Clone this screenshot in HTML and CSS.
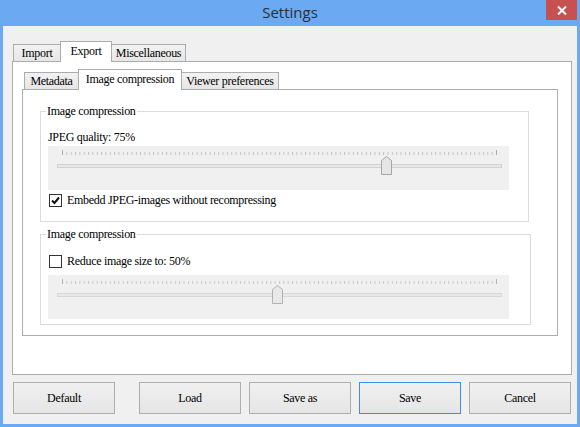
FILE: index.html
```html
<!DOCTYPE html>
<html>
<head>
<meta charset="utf-8">
<link rel="stylesheet" href="styles.css">
</head>
<body>
<div class="window">
  <div class="titlebar">
    <span></span>
    <span class="title">Settings</span>
    <span class="close">
      <svg width="10" height="9" viewBox="0 0 10 9"><path d="M1 0.5 L9 8.5 M9 0.5 L1 8.5" stroke="#fff" stroke-width="2"/></svg>
    </span>
  </div>
  <div class="client">
    <div class="tabs outer-tabs">
      <div class="tab t-import">Import</div>
      <div class="tab sel t-export">Export</div>
      <div class="tab t-misc">Miscellaneous</div>
    </div>
    <div class="panel outer-panel">
      <div class="tabs inner-tabs">
        <div class="tab t-meta">Metadata</div>
        <div class="tab sel t-imgc">Image compression</div>
        <div class="tab t-view">Viewer preferences</div>
      </div>
      <div class="panel inner-panel">
        <fieldset class="group g1">
          <legend>Image compression</legend>
          <div class="label">JPEG quality: 75%</div>
          <div class="slider">
            <svg width="461" height="44" viewBox="0 0 461 44">
              <defs>
                <pattern id="tk1" x="14" y="0" width="4.34" height="44" patternUnits="userSpaceOnUse">
                  <rect x="0" y="6" width="1" height="3" fill="#c2c2c2"/>
                </pattern>
              </defs>
              <rect x="14" y="0" width="435" height="44" fill="url(#tk1)"/>
              <rect x="14" y="4" width="1" height="5" fill="#ababab"/>
              <rect x="448" y="4" width="1" height="5" fill="#ababab"/>
              <rect x="9.5" y="18.5" width="444" height="3" fill="#e7e7e7" stroke="#d2d2d2"/>
              <path d="M333.5 14.5 L338.5 10.5 L343.5 14.5 L343.5 28.5 L333.5 28.5 Z" fill="#e6e6e6" stroke="#a6a6a6"/>
            </svg>
          </div>
          <label class="check">
            <span class="box">
              <svg width="11" height="11" viewBox="0 0 11 11"><path d="M2 5.5 L4.5 8 L9 2.5" fill="none" stroke="#111" stroke-width="2"/></svg>
            </span>
            <span>Embedd JPEG-images without recompressing</span>
          </label>
        </fieldset>
        <fieldset class="group g2">
          <legend>Image compression</legend>
          <label class="check">
            <span class="box"></span>
            <span>Reduce image size to: 50%</span>
          </label>
          <div class="slider slider2">
            <svg width="461" height="44" viewBox="0 0 461 44">
              <defs>
                <pattern id="tk2" x="14" y="0" width="4.34" height="44" patternUnits="userSpaceOnUse">
                  <rect x="0" y="6" width="1" height="3" fill="#c8c8c8"/>
                </pattern>
              </defs>
              <rect x="14" y="0" width="435" height="44" fill="url(#tk2)"/>
              <rect x="14" y="4" width="1" height="5" fill="#b4b4b4"/>
              <rect x="448" y="4" width="1" height="5" fill="#b4b4b4"/>
              <rect x="9.5" y="18.5" width="444" height="3" fill="#e9e9e9" stroke="#d8d8d8"/>
              <path d="M224.5 14.5 L229.5 10.5 L234.5 14.5 L234.5 28.5 L224.5 28.5 Z" fill="#e8e8e8" stroke="#b2b2b2"/>
            </svg>
          </div>
        </fieldset>
      </div>
    </div>
    <div class="buttons">
      <div class="btn b-default">Default</div>
      <div class="btn">Load</div>
      <div class="btn">Save as</div>
      <div class="btn focus">Save</div>
      <div class="btn">Cancel</div>
    </div>
  </div>
</div>
</body>
</html>
```
FILE: styles.css
```css
* { box-sizing: border-box; }
html, body { margin: 0; padding: 0; }
body {
  width: 580px;
  height: 427px;
  background: #6ba9f2;
  font-family: "Liberation Serif", serif;
  font-size: 12px;
  letter-spacing: -0.3px;
  color: #000;
  overflow: hidden;
}
.window {
  display: flex;
  flex-direction: column;
  width: 580px;
  height: 427px;
}
.titlebar {
  height: 26px;
  display: grid;
  grid-template-columns: 1fr auto 1fr;
}
.title {
  font-family: "Open Sans", "Noto Sans", sans-serif;
  font-size: 15px;
  letter-spacing: 0;
  color: #2e2e2e;
  line-height: 24px;
}
.close {
  justify-self: end;
  align-self: start;
  width: 31px;
  height: 20px;
  margin-right: 3px;
  background: #c75050;
  display: flex;
  align-items: center;
  justify-content: center;
}
.client {
  margin: 0 3px;
  height: 398px;
  background: #f0f0f0;
  padding: 15px 6px 0 9px;
  display: flex;
  flex-direction: column;
}
.tabs {
  display: flex;
  align-items: flex-end;
  height: 20px;
}
.outer-tabs { padding-left: 1px; }
.inner-tabs { padding-left: 2px; }
.tab {
  height: 17px;
  border: 1px solid #acacac;
  border-bottom: none;
  background: linear-gradient(#f2f2f2, #e6e6e6);
  line-height: 14px;
  padding-top: 1px;
  text-align: center;
  white-space: nowrap;
  margin-left: -1px;
}
.tab:first-child { margin-left: 0; }
.tab.sel {
  height: 21px;
  margin-bottom: -1px;
  background: #fff;
  padding-top: 2px;
  position: relative;
  z-index: 1;
}
.t-import { width: 48px; }
.t-export { width: 52px; }
.t-misc { width: 75px; }
.t-meta { width: 55px; }
.t-imgc { width: 104px; }
.t-view { width: 98px; }
.panel {
  background: #fff;
  border: 1px solid #acacac;
}
.outer-panel {
  width: 560px;
  height: 314px;
  padding: 7px 0 0 9px;
}
.inner-panel {
  width: 536px;
  height: 247px;
  padding: 14px 0 0 17px;
  display: flex;
  flex-direction: column;
}
.group {
  margin: 0;
  padding: 0 0 14px 7px;
  border: 1px solid #dcdcdc;
  min-inline-size: 0;
}
.group legend {
  padding: 0 1px;
  margin-left: -2px;
  line-height: 14px;
}
.g1 { width: 489px; }
.g2 { width: 491px; margin-top: 5px; padding-bottom: 5px; }
.label {
  line-height: 14px;
  margin-top: 12px;
}
.slider {
  width: 461px;
  height: 44px;
  margin-top: 2px;
  background: #f0f0f0;
}
.slider svg { display: block; }
.slider2 { margin-top: 7px; }
.check {
  display: flex;
  align-items: center;
  height: 14px;
  margin-top: 3px;
}
.g2 .check { margin-top: 13px; }
.box {
  width: 13px;
  height: 13px;
  margin-left: 1px;
  margin-right: 5px;
  border: 1px solid #333;
  background: #fff;
  display: flex;
  align-items: center;
  justify-content: center;
}
.box svg { display: block; }
.buttons {
  display: flex;
  gap: 8px;
  margin-top: 7px;
  padding-left: 1px;
}
.btn {
  width: 102px;
  height: 32px;
  border: 1px solid #adadad;
  background: linear-gradient(#f0f0f0, #e5e5e5);
  display: flex;
  align-items: center;
  justify-content: center;
}
.b-default { margin-right: 16px; }
.btn.focus { border-color: #3c8ee8; }
```
